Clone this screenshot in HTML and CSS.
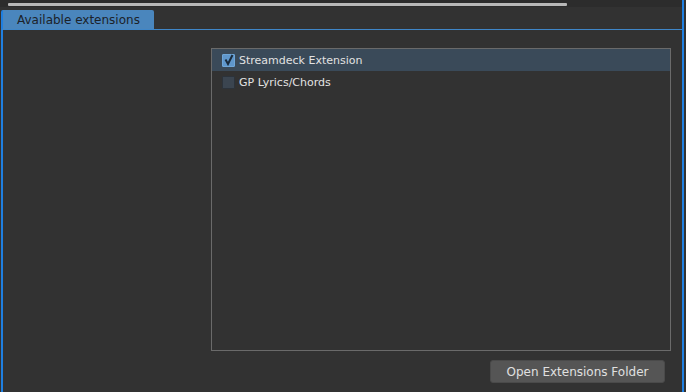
FILE: index.html
```html
<!DOCTYPE html>
<html lang="en">
<head>
    <meta charset="UTF-8">
    <title>Extensions</title>
    <link rel="stylesheet" href="styles.css">
</head>
<body>
    <div class="window">
        <div class="scroll-track">
            <div class="scroll-thumb"></div>
        </div>
        <div class="tabs">
            <div class="tab active">Available extensions</div>
        </div>
        <div class="panel">
            <div class="list">
                <div class="list-row selected">
                    <span class="check checked">
                        <svg width="12" height="12" viewBox="0 0 12 12">
                            <path d="M2.5 5.5 L5 10 L9.5 1" fill="none" stroke="#1a2b3c" stroke-width="2"/>
                        </svg>
                    </span>
                    <span class="label">Streamdeck Extension</span>
                </div>
                <div class="list-row">
                    <span class="check"></span>
                    <span class="label">GP Lyrics/Chords</span>
                </div>
            </div>
            <div class="actions">
                <button class="btn">Open Extensions Folder</button>
            </div>
        </div>
    </div>
</body>
</html>
```

FILE: styles.css
```css
html, body {
    margin: 0;
    padding: 0;
    background: #323232;
}
body {
    width: 686px;
    height: 392px;
    overflow: hidden;
    font-family: "DejaVu Sans", Verdana, sans-serif;
}
.window {
    width: 684px;
    height: 392px;
    box-sizing: border-box;
    border-right: 2px solid #1f7fe0;
    display: flex;
    flex-direction: column;
}
.scroll-track {
    height: 7px;
    background: #2c2c2c;
    padding: 3px 0 0 8px;
    box-sizing: border-box;
}
.scroll-thumb {
    width: 559px;
    height: 3px;
    background: #b8b8b8;
    border-radius: 1px;
}
.tabs {
    display: flex;
    margin-left: 1px;
    padding-top: 3px;
}
.tab {
    height: 19px;
    line-height: 20px;
    padding: 0 14px 0 14px;
    font-size: 12px;
    color: #1a1f26;
    background: #4a86bd;
    border-radius: 2px 2px 0 0;
    border-left: 2px solid #1f7fe0;
}
.tab.active {
    color: #1c2229;
}
.panel {
    flex: 1;
    display: flex;
    flex-direction: column;
    align-items: flex-end;
    border-top: 1px solid #3f86c8;
    border-left: 2px solid #1f7fe0;
    margin-left: 1px;
    padding: 18px 11px 0 0;
}
.list {
    width: 458px;
    height: 301px;
    border: 1px solid #6a6a6a;
}
.list-row {
    height: 22px;
    display: flex;
    align-items: center;
    padding-left: 10px;
    font-size: 11px;
    color: #e2e2e2;
}
.list-row.selected {
    background: #3a4a59;
}
.check {
    width: 11px;
    height: 11px;
    margin-right: 4px;
    background: #3b4550;
    border: 1px solid #2c333b;
    border-radius: 1px;
    position: relative;
}
.check.checked {
    background: #5f97cc;
    border-color: #6fa6d8;
}
.check svg {
    position: absolute;
    left: 0;
    top: -1px;
}
.actions {
    margin-top: 9px;
    display: flex;
}
.btn {
    width: 175px;
    height: 23px;
    background: #555555;
    border: 1px solid #4a4a4a;
    border-radius: 3px;
    color: #e0e0e0;
    font-family: "DejaVu Sans", Verdana, sans-serif;
    font-size: 12px;
    padding: 0;
    margin-right: 6px;
}
```
